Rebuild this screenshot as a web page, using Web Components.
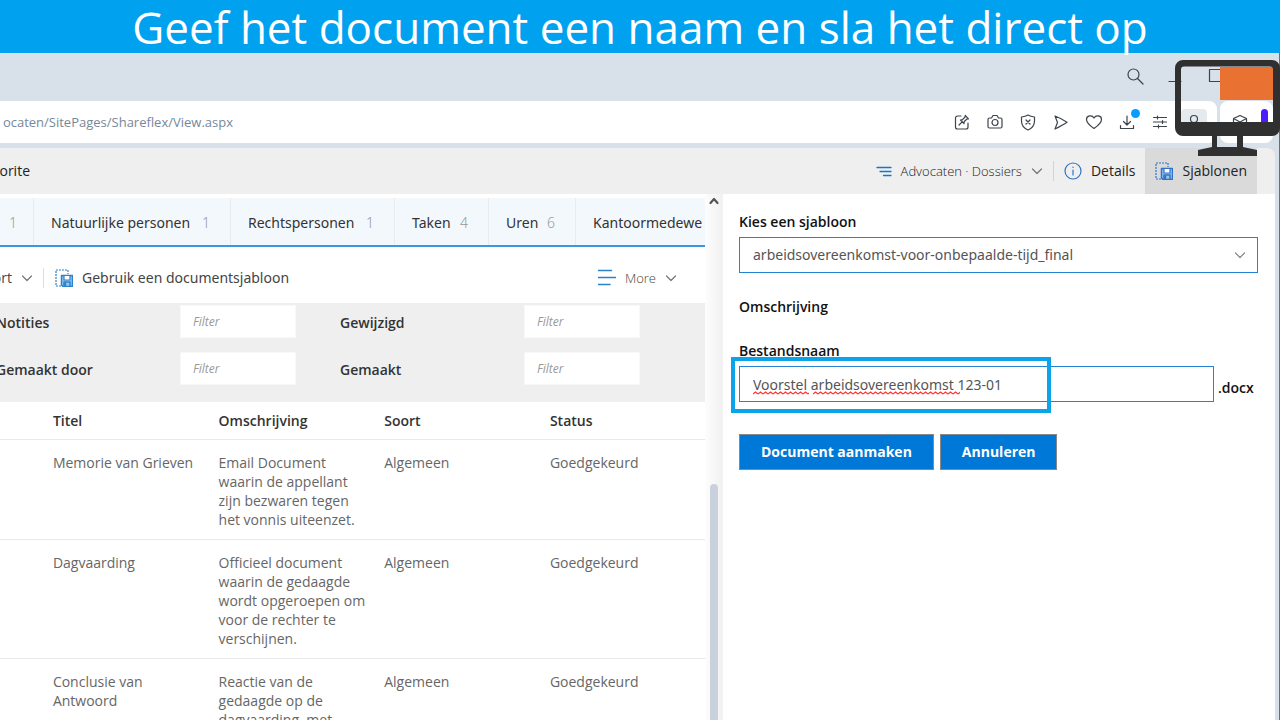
<!DOCTYPE html>
<html lang="nl">
<head>
<meta charset="utf-8">
<title>Geef het document een naam</title>
<style>
  html, body { height: 100%; }
  body {
    margin: 0; overflow: hidden; background: #d8e0e9; color: #333;
    font: 14px/20px "Open Sans", "Noto Sans", sans-serif;
  }
</style>
</head>
<body>
<demo-slide></demo-slide>
<script>
class Base extends HTMLElement {
  constructor() {
    super();
    this.attachShadow({ mode: 'open' }).innerHTML =
      '<style>*{box-sizing:border-box}button,input,select{font:inherit;color:inherit}button{border:0;background:none;padding:0}a{color:inherit;text-decoration:none}</style>';
  }
  connectedCallback() {
    if (this.done) return;
    this.done = true;
    this.shadowRoot.innerHTML += this.view();
  }
}
const define = (name, view) => customElements.define(name, class extends Base { view() { return view(this); } });

const ICONS = {
  search: [18, '<circle cx="7.500" cy="7.500" r="5.500"/><path d="M11.500 11.500 17 17"/>'],
  minimize: [18, '<path d="M3 14.500h12"/>'],
  maximize: [18, '<path d="M3.500 2.500h12v12h-12z"/>'],
  compose: [18, '<path d="M8 3H4.500A2 2 0 0 0 2.500 5v9a2 2 0 0 0 2 2h8.500a2 2 0 0 0 2-2v-4"/><path d="m6 12 3.200-3.200M7.500 7l3.500 3.500.3-2L14 6l1.500-.2L12.200 2.500 12 4 9.500 6.700z"/>'],
  camera: [18, '<path d="M2 6.500A1.500 1.500 0 0 1 3.500 5h2L7 2.500h4L12.500 5h2A1.500 1.500 0 0 1 16 6.500v7a1.500 1.500 0 0 1-1.500 1.500h-11A1.500 1.500 0 0 1 2 13.500z"/><circle cx="9" cy="9.500" r="3"/>'],
  shield: [18, '<path d="M9 2c2 1.300 4 1.700 6.500 2v4c0 4-2 7-6.500 9-4.500-2-6.500-5-6.500-9V4C5 3.700 7 3.300 9 2z"/><path d="m7 7 4 4M11 7l-4 4"/>'],
  send: [18, '<path d="M3 3c4 1.500 8 3.700 12 6.200C11 12 7 14 3 16l2.500-6.500z"/>'],
  heart: [18, '<path d="M9 15.500C4 12 1.500 9.500 1.500 6.500 1.500 2.500 7 1.500 9 5c2-3.500 7.500-2.500 7.500 1.500 0 3-2.500 5.500-7.500 9z"/>'],
  download: [18, '<path d="M9 3v9M5.500 8.500 9 12l3.500-3.500M2.500 12.500v3h13v-3"/>'],
  sliders: [18, '<path d="M2.500 4.500h13M2.500 9h13M2.500 13.500h13M6.500 3v3M11.500 7.500v3M7.500 12v3"/>'],
  user: [18, '<circle cx="9" cy="6" r="3.500"/><path d="M3.500 16c0-4 2-5.500 5.500-5.500s5.500 1.500 5.500 5.500"/>'],
  cube: [18, '<path d="m9 2.500 6.500 3v7L9 16l-6.500-3.500v-7zM2.500 5.500 9 9l6.500-3.500M9 9v7"/>'],
  chevron: [12, '<path d="M1.500 4 6 8.500 10.500 4"/>'],
  up: [12, '<path d="m2.500 8 3.500-4 3.500 4" stroke-width="2.200"/>'],
  filter: [16, '<path d="M1 4.500h14M4 8.500h11M7.500 12.500H15" stroke-width="1.300"/>'],
  info: [18, '<circle cx="9" cy="9" r="8"/><path d="M9 8v5M9 5v.5"/>'],
  more: [18, '<path d="M0 1.500h13.500M0 8.500h18M0 15.500h12" stroke-width="1.500"/>'],
  template: [18, '<path d="M6 17H1V1h12v4" stroke-dasharray="2 1" stroke-linecap="butt"/><path d="M6.500 6.500h11v11H8l-1.500-1.500z" stroke-width="1.500" fill="#9cc6ea"/><path d="M9 7v4h6V7" fill="#fff"/><path d="M9 17v-4h6v4M10.500 14.500v2" stroke-width="1.500"/>']
};
define('app-icon', el => {
  const [size, art] = ICONS[el.getAttribute('name')];
  return `<style>:host{display:block;flex:none;width:${size}px;height:${size}px}svg{display:block}</style>
  <svg width="${size}" height="${size}" viewBox="0 0 ${size} ${size}" fill="none" stroke="currentColor" stroke-width="1.200" stroke-linecap="round" stroke-linejoin="round" aria-hidden="true">${art}</svg>`;
});

define('slide-title', () => `<style>
  :host{display:flex;align-items:center;justify-content:center;background:#00a2f0;color:#fff;height:53px}
  h1{margin:0;font:400 44px/60px "Open Sans",sans-serif;white-space:nowrap}
</style><h1><slot></slot></h1>`);

define('screen-badge', () => `<style>:host{display:block;width:106px;height:96px}svg{display:block}</style>
<svg width="106" height="96" viewBox="0 0 106 96" aria-hidden="true">
  <path d="M46 7h53v33H46z" fill="#e97132"/>
  <path fill="#303030" fill-rule="evenodd" d="M9 0h89a8 8 0 0 1 8 8v60a8 8 0 0 1-8 8H69v11l14 3v6H24v-6l14-3V76H9a8 8 0 0 1-8-8V8a8 8 0 0 1 8-8zM10 6.500a3 3 0 0 0-3 3V62h92V9.500a3 3 0 0 0-3-3zM43 76v11h20V76z"/>
</svg>`);

define('browser-bar', () => `<style>
  :host{display:block;color:#3d444c}
  .window{display:flex;align-items:center;justify-content:flex-end;gap:22px;height:48px;padding:0 55px 2px 0}
  .row{display:flex;gap:3px;height:42px;padding-right:6px}
  .address{flex:1;display:flex;align-items:center;justify-content:space-between;background:#fff;border-radius:0 8px 8px 0;padding-right:11px;min-width:0}
  .url{display:flex;justify-content:flex-end;width:233px;color:#77889a;font-size:13px;white-space:nowrap}
  nav{display:flex;align-items:center;gap:15px}
  button{display:block;position:relative}
  .dot::after{content:"";position:absolute;right:-4px;top:-4px;width:9px;height:9px;border-radius:50%;background:#0a9bff}
  .user{margin:0 -1px 0 -3px;padding:4px;background:#e5eaef;border-radius:4px}
  .side{width:53px;display:flex;align-items:center;justify-content:space-between;background:#fff;border-radius:8px;padding:0 5px 0 11px}
  .side i{width:7px;height:27px;border-radius:4px;background:#4a1cff}
  .gap{height:5px}
</style>
<div class="window">
  <button aria-label="Zoeken"><app-icon name="search"></app-icon></button>
  <button aria-label="Minimaliseren"><app-icon name="minimize"></app-icon></button>
  <button aria-label="Maximaliseren"><app-icon name="maximize"></app-icon></button>
</div>
<div class="row">
  <div class="address">
    <span class="url">ocaten/SitePages/Shareflex/View.aspx</span>
    <nav>
      ${['compose', 'camera', 'shield', 'send', 'heart', 'download', 'sliders', 'user'].map(n =>
        `<button class="${n === 'download' ? 'dot' : n}" aria-label="${n}"><app-icon name="${n}"></app-icon></button>`).join('')}
    </nav>
  </div>
  <div class="side"><button aria-label="cube"><app-icon name="cube"></app-icon></button><i></i></div>
</div>
<div class="gap"></div>`);

define('command-bar', () => `<style>
  :host{display:flex;justify-content:space-between;height:46px;background:#efefef;border-radius:0 8px 0 0;white-space:nowrap;overflow:hidden}
  .fav{justify-content:flex-end;width:30px}
  .right{display:flex;align-items:center;padding-right:18px}
  button{display:flex;align-items:center;gap:9px;height:46px;color:#222}
  .view{font-weight:300;font-size:13px;color:#222}
  .sep{width:1px;height:20px;background:#d4d4d4;margin:0 10px}
  .blue{color:#0f78cf}.info{color:#2f73c8}.dim{color:#777}
  .active{background:#dadada;padding:0 10px;margin-left:10px}
</style>
<button class="fav">orite</button>
<div class="right">
  <button class="view"><app-icon class="blue" name="filter"></app-icon>Advocaten · Dossiers<app-icon class="dim" name="chevron"></app-icon></button>
  <span class="sep"></span>
  <button><app-icon class="info" name="info"></app-icon>Details</button>
  <button class="active"><app-icon class="info" name="template"></app-icon>Sjablonen</button>
</div>`);

define('tab-strip', () => `<style>
  :host{display:grid;grid-template-columns:33px 197px 164px 94px 87px 1fr;height:49px;margin-top:4px;background:#f3f8fd;border-bottom:2px solid #3c97df;overflow:hidden;white-space:nowrap;font-family:"Noto Sans",sans-serif}
  button{display:flex;align-items:center;justify-content:space-between;padding:3px 20px 0 17px;border-left:1px solid #e8ecef}
  .first{justify-content:flex-end;border:0}
  .last{padding-right:0}
  span{color:#999;font-weight:300}
</style>
<button class="first"><span>1</span></button>
<button>Natuurlijke personen<span>1</span></button>
<button>Rechtspersonen<span>1</span></button>
<button>Taken<span>4</span></button>
<button>Uren<span>6</span></button>
<button class="last">Kantoormedewe</button>`);

define('list-toolbar', () => `<style>
  :host{display:flex;align-items:center;justify-content:space-between;height:56px;padding:6px 28px 0 0;white-space:nowrap;color:#444}
  div,button{display:flex;align-items:center;gap:9px}
  .export{width:33px;justify-content:flex-end}
  .template{font-family:"Noto Sans",sans-serif}
  .sep{width:1px;height:20px;background:#ddd;margin:0 2px 0 1px}
  .blue{color:#2c82cb}.dim{color:#777}
  .more{font-weight:300;font-size:13px}
</style>
<div>
  <button class="export">ort<app-icon class="dim" name="chevron"></app-icon></button>
  <span class="sep"></span>
  <button class="template"><app-icon class="blue" name="template"></app-icon>Gebruik een documentsjabloon</button>
</div>
<button class="more"><app-icon class="blue" name="more"></app-icon>More<app-icon class="dim" name="chevron"></app-icon></button>`);

define('filter-grid', () => `<style>
  :host{display:grid;grid-template-columns:184px 116px 228px 116px;row-gap:14px;align-content:start;
    height:99px;margin-left:-4px;padding-top:2px;background:#efefef;overflow:hidden}
  label{font-weight:600;line-height:35px;height:33px}
  label:nth-of-type(even){padding-left:44px}
  input{width:100%;height:33px;padding:0 12px;border:1px solid #f8f8f8;border-radius:0;background:#fff;font-size:12px}
  input::placeholder{color:#999;font-style:italic;opacity:1}
</style>
${['Notities', 'Gewijzigd', 'Gemaakt door', 'Gemaakt'].map((t, i) =>
  `<label for="f${i}">${t}</label><input id="f${i}" placeholder="Filter">`).join('')}`);

const ROWS = [
  ['Memorie van Grieven', 'Email Document waarin de appellant zijn bezwaren tegen het vonnis uiteenzet.'],
  ['Dagvaarding', 'Officieel document waarin de gedaagde wordt opgeroepen om voor de rechter te verschijnen.'],
  ['Conclusie van Antwoord', 'Reactie van de gedaagde op de dagvaarding, met']
];
define('document-table', () => `<style>
  :host{display:block}
  table{width:100%;table-layout:fixed;border-collapse:separate;border-spacing:0}
  .pad{width:7.500%}.col{width:23.500%}
  th,td{text-align:left;border-bottom:1px solid #e9e9e9;padding:0 18px 0 0}
  th{height:38px;font-weight:600;line-height:20px;color:#333}
  td{vertical-align:top;padding-top:13px;padding-bottom:10px;line-height:19px;color:#666;font-size:14px}
</style>
<table>
  <colgroup><col class="pad"><col class="col"><col class="col"><col class="col"><col></colgroup>
  <thead><tr><th></th><th>Titel</th><th>Omschrijving</th><th>Soort</th><th>Status</th></tr></thead>
  <tbody>${ROWS.map(([t, o]) => `<tr><td></td><td>${t}</td><td>${o}</td><td>Algemeen</td><td>Goedgekeurd</td></tr>`).join('')}</tbody>
</table>`);

define('scroll-rail', () => `<style>
  :host{display:flex;flex-direction:column;justify-content:space-between;align-items:center;background:linear-gradient(90deg,#fdfdfd,#f1f1f1);color:#555;padding-top:1px}
  i{width:8px;height:45%;border-radius:4px 4px 0 0;background:#c9d2dc}
</style><app-icon name="up"></app-icon><i></i>`);

define('template-panel', () => `<style>
  :host{display:block;background:#fff;padding:18px 17px 0 16px;border-left:1px solid #f2f2f2}
  label,h2,.ext{display:block;margin:0;font:600 14px/20px "Open Sans",sans-serif;color:#111}
  .pick{display:grid;align-items:center;margin:5px 0 24px}
  .pick>*{grid-area:1/1}
  select,input{width:100%;height:36px;border:1px solid #2583d6;border-radius:0;background:#fff;padding:0 13px;color:#555;outline:0;font-family:"Noto Sans",sans-serif}
  select{appearance:none}
  .pick app-icon{justify-self:end;margin-right:12px;color:#888;pointer-events:none}
  h2{margin-bottom:24px}
  .file{display:flex;align-items:center;gap:4px;margin-top:5px;position:relative}
  .file input{flex:1;min-width:0}
  .ext{padding-top:8px;width:40px}
  .spell{position:absolute;left:14px;top:25px}
  .mark{position:absolute;left:-8px;top:-9px;width:320px;height:56px;border:4px solid #0ba3ea;pointer-events:none}
  .actions{display:flex;gap:6px;margin-top:32px}
  .actions button{height:36px;padding:0 21px;border:1px solid #888;background:#0078d7;color:#fff;font-weight:700;white-space:nowrap}
</style>
<label for="tpl">Kies een sjabloon</label>
<div class="pick">
  <select id="tpl"><option>arbeidsovereenkomst-voor-onbepaalde-tijd_final</option></select>
  <app-icon name="chevron"></app-icon>
</div>
<h2>Omschrijving</h2>
<label for="name">Bestandsnaam</label>
<div class="file">
  <input id="name" value="Voorstel arbeidsovereenkomst 123-01" spellcheck="false">
  <span class="ext">.docx</span>
  <svg class="spell" width="208" height="4" aria-hidden="true">
    <defs><pattern id="w" width="5" height="4" patternUnits="userSpaceOnUse"><path d="M0 3 2.500 1 5 3" fill="none" stroke="#f33" stroke-width="1.200"/></pattern></defs>
    <rect width="56" height="4" fill="url(#w)"/><rect x="60" width="147" height="4" fill="url(#w)"/>
  </svg>
  <div class="mark"></div>
</div>
<div class="actions"><button>Document aanmaken</button><button>Annuleren</button></div>`);

define('demo-slide', () => `<style>
  :host{display:flex;flex-direction:column;height:100vh;position:relative}
  .browser{flex:1;min-height:0;display:flex;flex-direction:column;border-right:1px solid #66707c}
  .page{flex:1;min-height:0;display:flex;flex-direction:column;margin-right:4px}
  .body{flex:1;min-height:0;display:grid;grid-template-columns:minmax(0,705fr) 17px minmax(0,553fr);background:#fff;overflow:hidden}
  main{min-width:0;overflow:hidden}
  screen-badge{position:absolute;right:0;top:60px}
</style>
<slide-title>Geef het document een naam en sla het direct op</slide-title>
<div class="browser">
  <browser-bar></browser-bar>
  <div class="page">
    <command-bar></command-bar>
    <div class="body">
      <main>
        <tab-strip></tab-strip>
        <list-toolbar></list-toolbar>
        <filter-grid></filter-grid>
        <document-table></document-table>
      </main>
      <scroll-rail></scroll-rail>
      <template-panel></template-panel>
    </div>
  </div>
</div>
<screen-badge></screen-badge>`);
</script>
</body>
</html>
